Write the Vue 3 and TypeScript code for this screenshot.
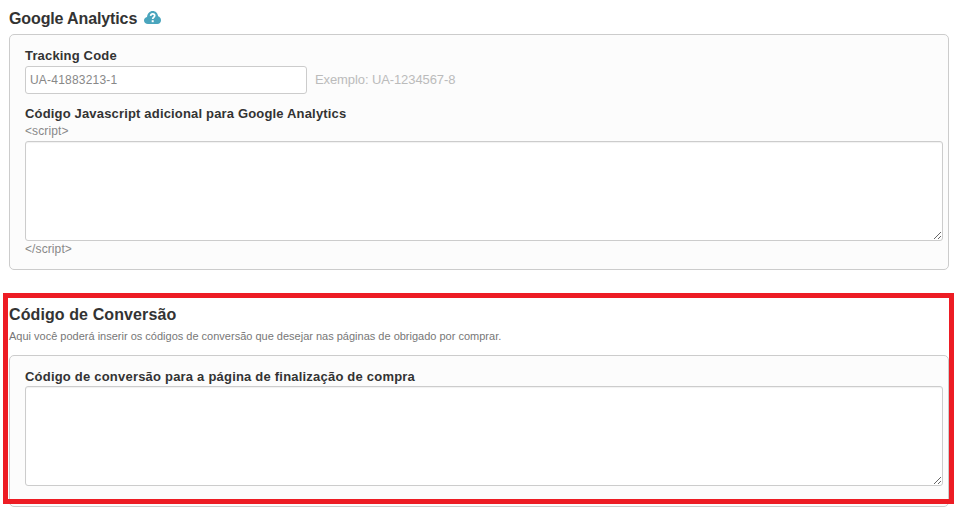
<script setup lang="ts">
const trackingCode = 'UA-41883213-1'
</script>

<template>
  <div class="page">
    <section class="first">
      <h2 class="title title-ga">
        Google Analytics
        <svg class="help" viewBox="0 0 17 13" width="17" height="13" aria-hidden="true">
          <path d="M4 13C1.7 13 0 11.5 0 9.4 0 7.6 1.2 6.2 3 5.9 3.4 2.5 5.7 0 8.7 0c2.9 0 5.1 2.2 5.4 5.3 1.7.4 2.9 2 2.9 3.9C17 11.4 15.5 13 13.4 13Z" fill="#4aa5bd"/>
          <path d="M6.6 4.9C6.8 3.6 7.6 2.9 8.7 2.9c1.2 0 2 .8 2 1.8 0 1.5-2 1.6-2 3.2" fill="none" stroke="#fff" stroke-width="1.7"/>
          <rect x="7.7" y="9.2" width="2" height="2" fill="#fff"/>
        </svg>
      </h2>
      <div class="box">
        <label class="label">Tracking Code</label>
        <div class="row">
          <input class="input" type="text" :value="trackingCode" />
          <span class="hint">Exemplo: UA-1234567-8</span>
        </div>
        <label class="label second-label">Código Javascript adicional para Google Analytics</label>
        <div class="tag">&lt;script&gt;</div>
        <textarea class="area"></textarea>
        <div class="tag closing">&lt;/script&gt;</div>
      </div>
    </section>

    <section class="conversion">
      <h2 class="title title-conv">Código de Conversão</h2>
      <p class="desc">Aqui você poderá inserir os códigos de conversão que desejar nas páginas de obrigado por comprar.</p>
      <div class="box box-conv">
        <label class="label label-conv">Código de conversão para a página de finalização de compra</label>
        <textarea class="area"></textarea>
      </div>
      <div class="highlight"></div>
    </section>
  </div>
</template>

<style>
html, body {
  margin: 0;
  background: #fff;
}
</style>

<style scoped>
.page {
  width: 957px;
  height: 517px;
  overflow: hidden;
  box-sizing: border-box;
  padding: 9px 8px 0 9px;
  font-family: "Liberation Sans", Arial, sans-serif;
  color: #333;
}
.title {
  margin: 0;
  font-size: 16px;
  line-height: 20px;
  font-weight: bold;
  color: #333;
  display: flex;
  align-items: center;
  gap: 7px;
}
.title-ga {
  letter-spacing: -0.12px;
}
.title-conv {
  letter-spacing: 0.1px;
}
.help {
  margin-top: -3px;
}
.box {
  margin-top: 5px;
  box-sizing: border-box;
  border: 1px solid #ccc;
  border-radius: 5px;
  background: #fcfcfc;
  padding: 12px 5px 0 15px;
}
.first .box {
  height: 236px;
}
.label {
  display: block;
  font-size: 13px;
  line-height: 18px;
  font-weight: bold;
  letter-spacing: 0.17px;
  color: #333;
}
.label-conv {
  letter-spacing: 0.21px;
}
.row {
  display: flex;
  align-items: center;
  gap: 8px;
  margin-top: 1px;
}
.input {
  box-sizing: border-box;
  width: 282px;
  height: 28px;
  margin: 0;
  padding: 0 4px;
  border: 1px solid #ccc;
  border-radius: 3px;
  background: #fff;
  font-family: inherit;
  font-size: 12px;
  letter-spacing: 0.2px;
  color: #888;
  outline: none;
}
.hint {
  font-size: 13px;
  letter-spacing: -0.1px;
  line-height: 26px;
  height: 26px;
  color: #bbb;
}
.second-label {
  margin-top: 11px;
}
.tag {
  font-size: 12px;
  line-height: 14px;
  letter-spacing: 0.1px;
  color: #888;
  margin: 1px 0 3px;
}
.closing {
  margin: 1px 0 0;
}
.area {
  display: block;
  box-sizing: border-box;
  width: 918px;
  height: 100px;
  margin: 0;
  padding: 4px;
  border: 1px solid #ccc;
  border-radius: 3px;
  background: #fff;
  outline: none;
  box-shadow: inset 0 1px 1px rgba(0, 0, 0, 0.06);
}
.conversion {
  position: relative;
  margin-top: 35px;
}
.desc {
  margin: 4px 0 0;
  font-size: 11px;
  line-height: 14px;
  color: #777;
}
.box-conv {
  margin-top: 12px;
  height: 152px;
  padding-top: 12px;
}
.highlight {
  position: absolute;
  left: -6px;
  top: -12px;
  width: 951px;
  height: 211px;
  box-sizing: border-box;
  border: 5px solid #ed1c24;
  pointer-events: none;
}
</style>
